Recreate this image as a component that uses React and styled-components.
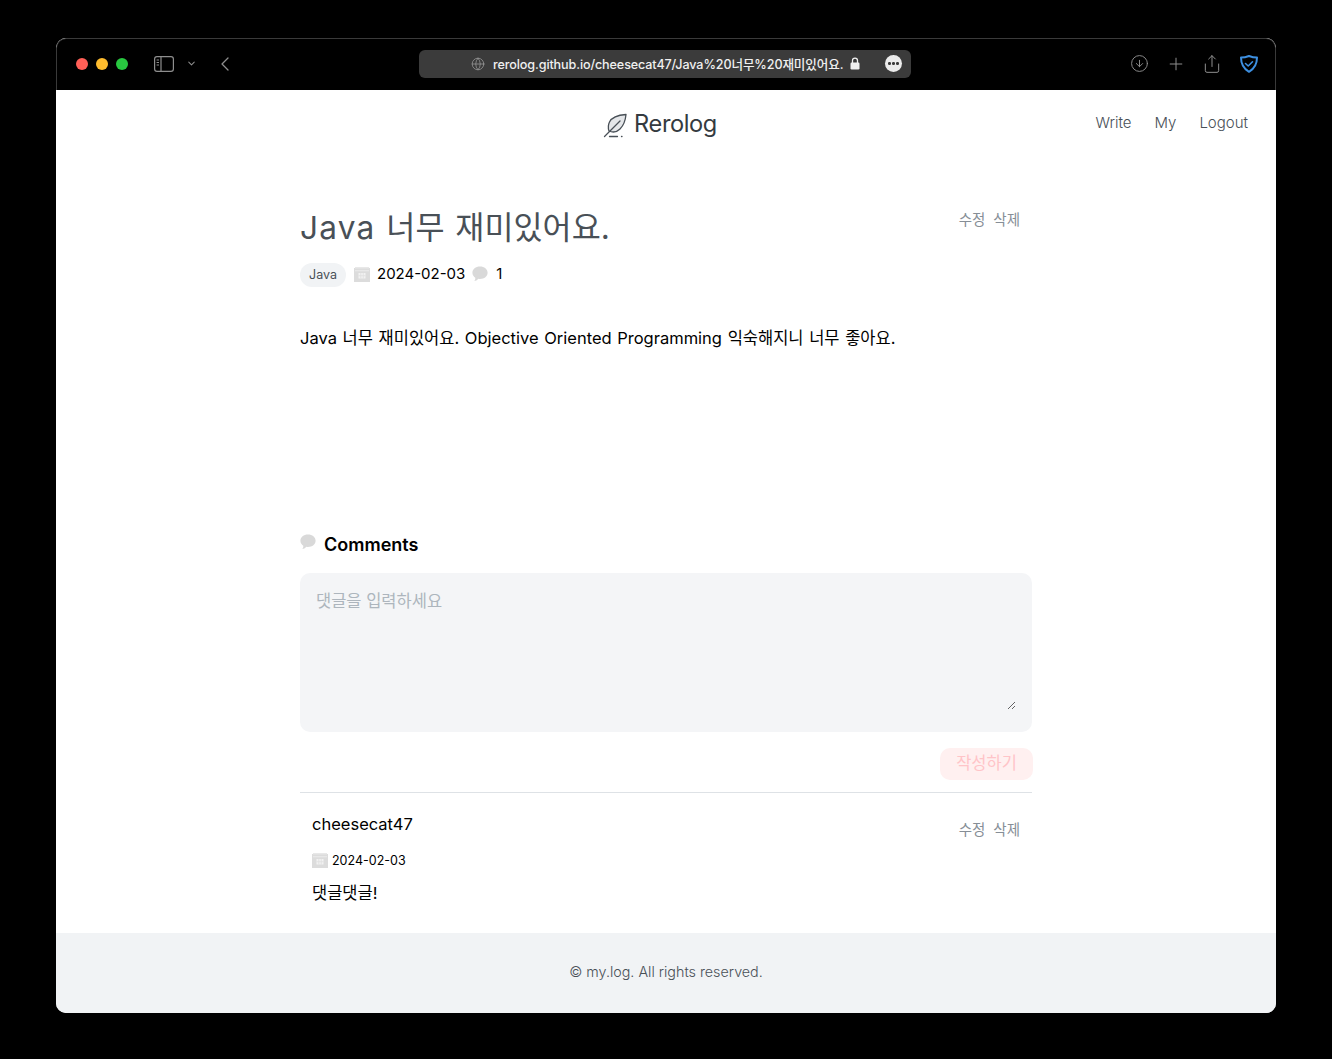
import styled, { createGlobalStyle } from 'styled-components';
import { ChevronDown, ChevronLeft, CircleArrowDown, Globe, Plus, Share } from 'lucide-react';

const GlobalStyle = createGlobalStyle`
  html, body {
    margin: 0;
    background: #000;
  }
  * {
    box-sizing: border-box;
  }
  body {
    font-family: "Inter", "Noto Sans CJK KR", sans-serif;
  }
`;

const Page = styled.div`
  width: 1332px;
  height: 1059px;
  padding: 38px 56px 46px;
  background: #000;
`;

const Browser = styled.div`
  display: flex;
  flex-direction: column;
  height: 975px;
  border-radius: 10px;
  overflow: hidden;
  background: #fff;
`;

const Toolbar = styled.div`
  display: grid;
  grid-template-columns: 343px 492px 1fr;
  align-items: center;
  height: 52px;
  padding: 0 16px 2px 19px;
  background: #000;
  border: 1px solid #3a3a3a;
  border-bottom: none;
  border-radius: 10px 10px 0 0;
`;

const ToolGroup = styled.div`
  display: flex;
  align-items: center;
  justify-content: ${(p) => (p.$end ? 'flex-end' : 'flex-start')};
  gap: ${(p) => p.$gap || 0}px;
  color: #8e8e8e;
`;

const Light = styled.span`
  width: 12px;
  height: 12px;
  margin-right: 8px;
  border-radius: 50%;
  background: ${(p) => p.$color};
`;

const SidebarIcon = styled.svg`
  width: 20px;
  height: 16px;
  margin-left: 18px;
  margin-right: 12px;
`;

const BackIcon = styled(ChevronLeft)`
  margin-left: 16px;
`;

const ShareIcon = styled(Share)`
  margin-left: -1px;
`;

const AddressBar = styled.div`
  display: flex;
  align-items: center;
  height: 28px;
  padding: 0 9px 0 52px;
  border-radius: 6px;
  background: #3b3b3b;
  color: #f0f0f0;
  font-family: "Inter", "Noto Sans CJK KR", sans-serif;
  font-size: 12.6px;
  font-weight: 500;
  white-space: nowrap;
`;

const Url = styled.span`
  margin-left: 8px;
  letter-spacing: -0.12px;
`;

const LockIcon = styled.svg`
  margin-left: 7px;
`;

const MoreButton = styled.span`
  display: flex;
  align-items: center;
  justify-content: center;
  gap: 1.5px;
  width: 17px;
  height: 17px;
  margin-left: auto;
  border-radius: 50%;
  background: #ececec;
  i {
    width: 2.5px;
    height: 2.5px;
    border-radius: 50%;
    background: #3b3b3b;
  }
`;

const Content = styled.div`
  flex: 1;
  display: flex;
  flex-direction: column;
  min-height: 0;
`;

const Header = styled.header`
  position: relative;
  display: flex;
  align-items: center;
  justify-content: center;
  height: 68px;
  flex: none;
`;

const Logo = styled.div`
  display: flex;
  align-items: center;
  gap: 5px;
  margin: -2px 0 0 -12px;
  color: #343a40;
  font-size: 23.6px;
  font-weight: 400;
  letter-spacing: -0.4px;
  svg {
    margin-top: 3px;
  }
`;

const Nav = styled.nav`
  position: absolute;
  top: 21px;
  right: 28px;
  display: flex;
  gap: 23px;
  color: #495057;
  font-size: 15px;
  font-weight: 300;
  line-height: 24px;
`;

const Main = styled.main`
  flex: 1;
  width: 732px;
  margin: 0 auto;
`;

const PostHead = styled.div`
  display: flex;
  justify-content: space-between;
  align-items: flex-start;
  margin-top: 46px;
`;

const Title = styled.h1`
  margin: 1px 0 0;
  color: #495057;
  font-size: 31.6px;
  font-weight: 400;
  line-height: 46px;
  word-spacing: 2px;
`;

const TitleLatin = styled.span`
  letter-spacing: 1.2px;
`;

const Actions = styled.div`
  display: flex;
  gap: 8px;
  margin: ${(p) => p.$top}px ${(p) => p.$right}px 0 0;
  color: #868e96;
  font-size: 14.5px;
  line-height: 20px;
`;

const Meta = styled.div`
  display: flex;
  align-items: center;
  margin-top: 12px;
  height: 24px;
  color: #000;
  font-size: 15px;
  line-height: 24px;
`;

const MetaText = styled.span`
  margin-bottom: 3px;
`;

const Tag = styled.span`
  display: flex;
  align-items: center;
  justify-content: center;
  width: 46px;
  height: 24px;
  margin-right: 8px;
  border-radius: 12px;
  background: #f1f3f5;
  color: #495057;
  font-size: 12.5px;
`;

const IconBox = styled.svg`
  flex: none;
  margin-right: ${(p) => p.$right || 0}px;
  margin-left: ${(p) => p.$left || 0}px;
  margin-bottom: ${(p) => p.$lift || 0}px;
`;

const Body = styled.p`
  margin: 38px 0 0;
  color: #000;
  font-size: 16.5px;
  line-height: 26px;
  word-spacing: 1px;
`;

const CommentsTitle = styled.h2`
  display: flex;
  align-items: flex-start;
  gap: 8px;
  margin: 181px 0 0;
  color: #000;
  font-size: 18px;
  font-weight: 600;
  line-height: 26px;
  svg {
    margin-top: 2px;
  }
`;

const InputBox = styled.div`
  height: 159px;
  margin-top: 15px;
  padding: 17px 16px 22px;
  border-radius: 10px;
  background: #f4f5f7;
`;

const CommentInput = styled.textarea`
  display: block;
  width: 100%;
  height: 120px;
  padding: 0;
  border: none;
  outline: none;
  background: transparent;
  color: #000;
  font-family: inherit;
  font-size: 16.5px;
  line-height: 22px;
  &::placeholder {
    color: #adb5bd;
  }
`;

const FormFoot = styled.div`
  display: flex;
  justify-content: flex-end;
  margin-top: 16px;
`;

const SubmitButton = styled.button`
  width: 93px;
  height: 32px;
  margin-right: -1px;
  padding: 0 0 4px;
  border: none;
  border-radius: 10px;
  background: #fff0f0;
  color: #ffc4c8;
  font-family: inherit;
  font-size: 16.5px;
`;

const Comment = styled.section`
  margin-top: 12px;
  padding: 19px 12px 0;
  border-top: 1px solid #dee2e6;
`;

const CommentHead = styled.div`
  display: flex;
  justify-content: space-between;
  align-items: flex-start;
  height: 24px;
`;

const Author = styled.div`
  color: #000;
  font-size: 16.5px;
  line-height: 24px;
`;

const CommentDate = styled.div`
  display: flex;
  align-items: center;
  gap: 4px;
  height: 20px;
  margin-top: 14px;
  color: #000;
  font-size: 12.5px;
`;

const CommentText = styled.div`
  margin-top: 11px;
  color: #000;
  font-size: 16.5px;
  line-height: 24px;
`;

const Footer = styled.footer`
  display: flex;
  align-items: center;
  justify-content: center;
  flex: none;
  height: 80px;
  padding-bottom: 4px;
  background: #f1f3f5;
  color: #495057;
  font-size: 14.3px;
  font-weight: 300;
`;

function Sidebar() {
  return (
    <SidebarIcon viewBox="0 0 20 16" fill="none" stroke="currentColor" strokeWidth="1.2">
      <rect x="0.6" y="0.6" width="18.8" height="14.8" rx="2.4" />
      <path d="M7 .6v14.8M2.6 4h2.4M2.6 6.5h2.4M2.6 9h2.4" />
    </SidebarIcon>
  );
}

function Lock() {
  return (
    <LockIcon width="10" height="13" viewBox="0 0 10 13">
      <path d="M2.5 6V3.6a2.5 2.5 0 0 1 5 0V6" fill="none" stroke="#f0f0f0" strokeWidth="1.3" />
      <rect x="0.5" y="5.5" width="9" height="7" rx="1.2" fill="#f0f0f0" />
    </LockIcon>
  );
}

function Shield() {
  return (
    <svg width="20" height="20" viewBox="0 0 20 20" fill="none" stroke="#3d8fe0" strokeWidth="2">
      <path d="M2 3.6C4.5 3.6 7.5 3 10 2c2.5 1 5.5 1.6 8 1.6 0 6.5-2 10.9-8 14.2C4 14.5 2 10.1 2 3.6Z" strokeLinejoin="round" />
      <path d="M6.5 9.5 9.2 12l4.3-4.2" strokeWidth="1.6" strokeLinecap="round" strokeLinejoin="round" />
    </svg>
  );
}

function Feather() {
  return (
    <svg width="26" height="26" viewBox="0 0 26 26" fill="none" stroke="#495057" strokeWidth="1.3" strokeLinecap="round" strokeLinejoin="round">
      <path d="M23 2.5C16 3 9 5 6.5 10 5 13 5 16 6 19c3.5 1.5 8 1 11-2 3.5-3.5 5.5-9 6-14.5Z" fill="#e4e6e9" />
      <path d="M1.5 24.5 17 9" />
      <path d="M6.5 24.5h8M18.5 24.5h.5" />
    </svg>
  );
}

function CalendarIcon({ size, right, lift }) {
  return (
    <IconBox $right={right} $lift={lift} width={size} height={size} viewBox="0 0 16 16">
      <rect x="0" y="2" width="16" height="14" fill="#dcdcdc" />
      <rect x="1" y="1" width="14" height="1.5" fill="#e8e8e8" />
      <path d="M1 4.8h14" stroke="#f1f1f1" strokeWidth="0.8" />
      <path d="M4.5 7h7v5.5h-7z" fill="#f2f2f2" />
      <path d="M6.8 7v5.5M9.2 7v5.5M4.5 9.7h7" stroke="#dcdcdc" strokeWidth="0.7" />
    </IconBox>
  );
}

function BubbleIcon({ left, right, lift }) {
  return (
    <IconBox $left={left} $right={right} $lift={lift} width="16" height="16" viewBox="0 0 16 16">
      <path d="M8 .5c4.3 0 7.6 2.7 7.6 6.2S12.3 12.9 8 12.9c-.6 0-1.2-.1-1.8-.2C5.2 14 3.6 15 2.3 15c.7-.9 1.1-2 1-3.3C1.5 10.5.4 8.7.4 6.7.4 3.2 3.7.5 8 .5Z" fill="#d9d9d9" />
    </IconBox>
  );
}

export default function App() {
  return (
    <>
      <GlobalStyle />
      <Page>
        <Browser>
          <Toolbar>
            <ToolGroup>
              <Light $color="#ff5f57" />
              <Light $color="#febc2e" />
              <Light $color="#28c840" />
              <Sidebar />
              <ChevronDown size={11} strokeWidth={2.2} />
              <BackIcon size={24} strokeWidth={1.3} />
            </ToolGroup>
            <AddressBar>
              <Globe size={14} strokeWidth={1.2} color="#a0a0a0" />
              <Url>rerolog.github.io/cheesecat47/Java%20너무%20재미있어요.</Url>
              <Lock />
              <MoreButton>
                <i />
                <i />
                <i />
              </MoreButton>
            </AddressBar>
            <ToolGroup $end $gap={17}>
              <CircleArrowDown size={19} strokeWidth={1.2} />
              <Plus size={20} strokeWidth={1.2} />
              <ShareIcon size={20} strokeWidth={1.2} />
              <Shield />
            </ToolGroup>
          </Toolbar>
          <Content>
            <Header>
              <Logo>
                <Feather />
                Rerolog
              </Logo>
              <Nav>
                <span>Write</span>
                <span>My</span>
                <span>Logout</span>
              </Nav>
            </Header>
            <Main>
              <PostHead>
                <Title><TitleLatin>Java</TitleLatin> 너무 재미있어요.</Title>
                <Actions $top={6} $right={12}>
                  <span>수정</span>
                  <span>삭제</span>
                </Actions>
              </PostHead>
              <Meta>
                <Tag>Java</Tag>
                <CalendarIcon size={16} right={7} lift={2} />
                <MetaText>2024-02-03</MetaText>
                <BubbleIcon left={7} right={8} lift={2} />
                <MetaText>1</MetaText>
              </Meta>
              <Body>Java 너무 재미있어요. Objective Oriented Programming 익숙해지니 너무 좋아요.</Body>
              <CommentsTitle>
                <BubbleIcon />
                Comments
              </CommentsTitle>
              <InputBox>
                <CommentInput placeholder="댓글을 입력하세요" />
              </InputBox>
              <FormFoot>
                <SubmitButton disabled>작성하기</SubmitButton>
              </FormFoot>
              <Comment>
                <CommentHead>
                  <Author>cheesecat47</Author>
                  <Actions $top={8} $right={0}>
                    <span>수정</span>
                    <span>삭제</span>
                  </Actions>
                </CommentHead>
                <CommentDate>
                  <CalendarIcon size={16} />
                  2024-02-03
                </CommentDate>
                <CommentText>댓글댓글!</CommentText>
              </Comment>
            </Main>
            <Footer>© my.log. All rights reserved.</Footer>
          </Content>
        </Browser>
      </Page>
    </>
  );
}
